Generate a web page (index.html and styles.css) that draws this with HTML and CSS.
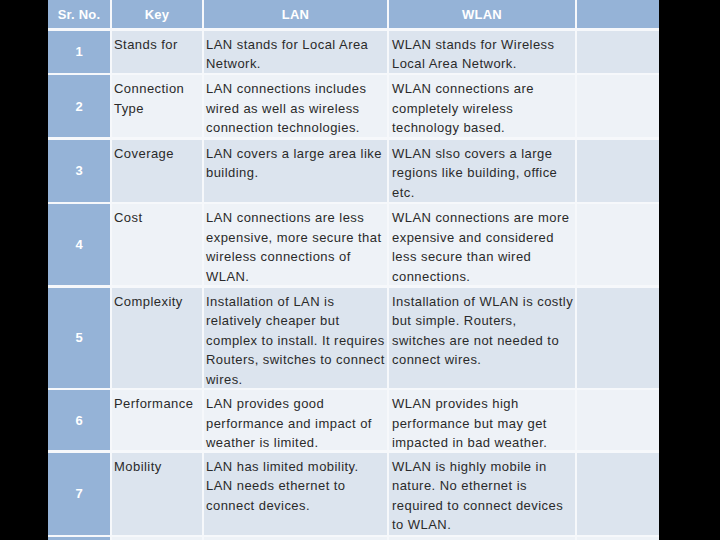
FILE: index.html
```html
<!DOCTYPE html>
<html>
<head>
<meta charset="utf-8">
<link rel="stylesheet" href="styles.css">
</head>
<body>
<div class="table">
  <div class="th">Sr. No.</div>
  <div class="th">Key</div>
  <div class="th">LAN</div>
  <div class="th">WLAN</div>
  <div class="th"></div>

  <div class="no">1</div>
  <div class="td odd">Stands for</div>
  <div class="td odd">LAN stands for Local Area<br>Network.</div>
  <div class="td odd">WLAN stands for Wireless<br>Local Area Network.</div>
  <div class="td odd"></div>

  <div class="no">2</div>
  <div class="td even">Connection<br>Type</div>
  <div class="td even">LAN connections includes<br>wired as well as wireless<br>connection technologies.</div>
  <div class="td even">WLAN connections are<br>completely wireless<br>technology based.</div>
  <div class="td even"></div>

  <div class="no">3</div>
  <div class="td odd">Coverage</div>
  <div class="td odd">LAN covers a large area like<br>building.</div>
  <div class="td odd">WLAN slso covers a large<br>regions like building, office<br>etc.</div>
  <div class="td odd"></div>

  <div class="no">4</div>
  <div class="td even">Cost</div>
  <div class="td even">LAN connections are less<br>expensive, more secure that<br>wireless connections of<br>WLAN.</div>
  <div class="td even">WLAN connections are more<br>expensive and considered<br>less secure than wired<br>connections.</div>
  <div class="td even"></div>

  <div class="no">5</div>
  <div class="td odd">Complexity</div>
  <div class="td odd">Installation of LAN is<br>relatively cheaper but<br>complex to install. It requires<br>Routers, switches to connect<br>wires.</div>
  <div class="td odd">Installation of WLAN is costly<br>but simple. Routers,<br>switches are not needed to<br>connect wires.</div>
  <div class="td odd"></div>

  <div class="no">6</div>
  <div class="td even">Performance</div>
  <div class="td even">LAN provides good<br>performance and impact of<br>weather is limited.</div>
  <div class="td even">WLAN provides high<br>performance but may get<br>impacted in bad weather.</div>
  <div class="td even"></div>

  <div class="no">7</div>
  <div class="td odd">Mobility</div>
  <div class="td odd">LAN has limited mobility.<br>LAN needs ethernet to<br>connect devices.</div>
  <div class="td odd">WLAN is highly mobile in<br>nature. No ethernet is<br>required to connect devices<br>to WLAN.</div>
  <div class="td odd"></div>

  <div class="no"></div>
  <div class="td even"></div>
  <div class="td even"></div>
  <div class="td even"></div>
  <div class="td even"></div>
</div>
</body>
</html>
```

FILE: styles.css
```css
html, body {
  margin: 0;
  padding: 0;
  background: #000;
  width: 720px;
  height: 540px;
  overflow: hidden;
}

.table {
  margin-left: 48px;
  width: 611px;
  display: grid;
  grid-template-columns: 62px 90px 183px 186px 82px;
  grid-template-rows: 28px 42px 62px 62px 81px 100px 60px 82px 20px;
  column-gap: 2px;
  row-gap: 2.5px;
  background: #f6f8fb;
  font-family: "Liberation Sans", Arial, sans-serif;
  font-size: 13px;
}

.th {
  background: #95b3d7;
  color: #fff;
  font-weight: bold;
  display: flex;
  align-items: center;
  justify-content: center;
  letter-spacing: 0.2px;
}

.no {
  background: #95b3d7;
  color: #fff;
  font-weight: bold;
  display: flex;
  align-items: center;
  justify-content: center;
}

.td {
  padding: 4px 0 0 2px;
  line-height: 19.5px;
  color: #2a2a2a;
  white-space: nowrap;
  letter-spacing: 0.45px;
}

.td:nth-child(5n+4) {
  padding-left: 3px;
}

.odd {
  background: #dce4ee;
}

.even {
  background: #eef2f7;
}
```
